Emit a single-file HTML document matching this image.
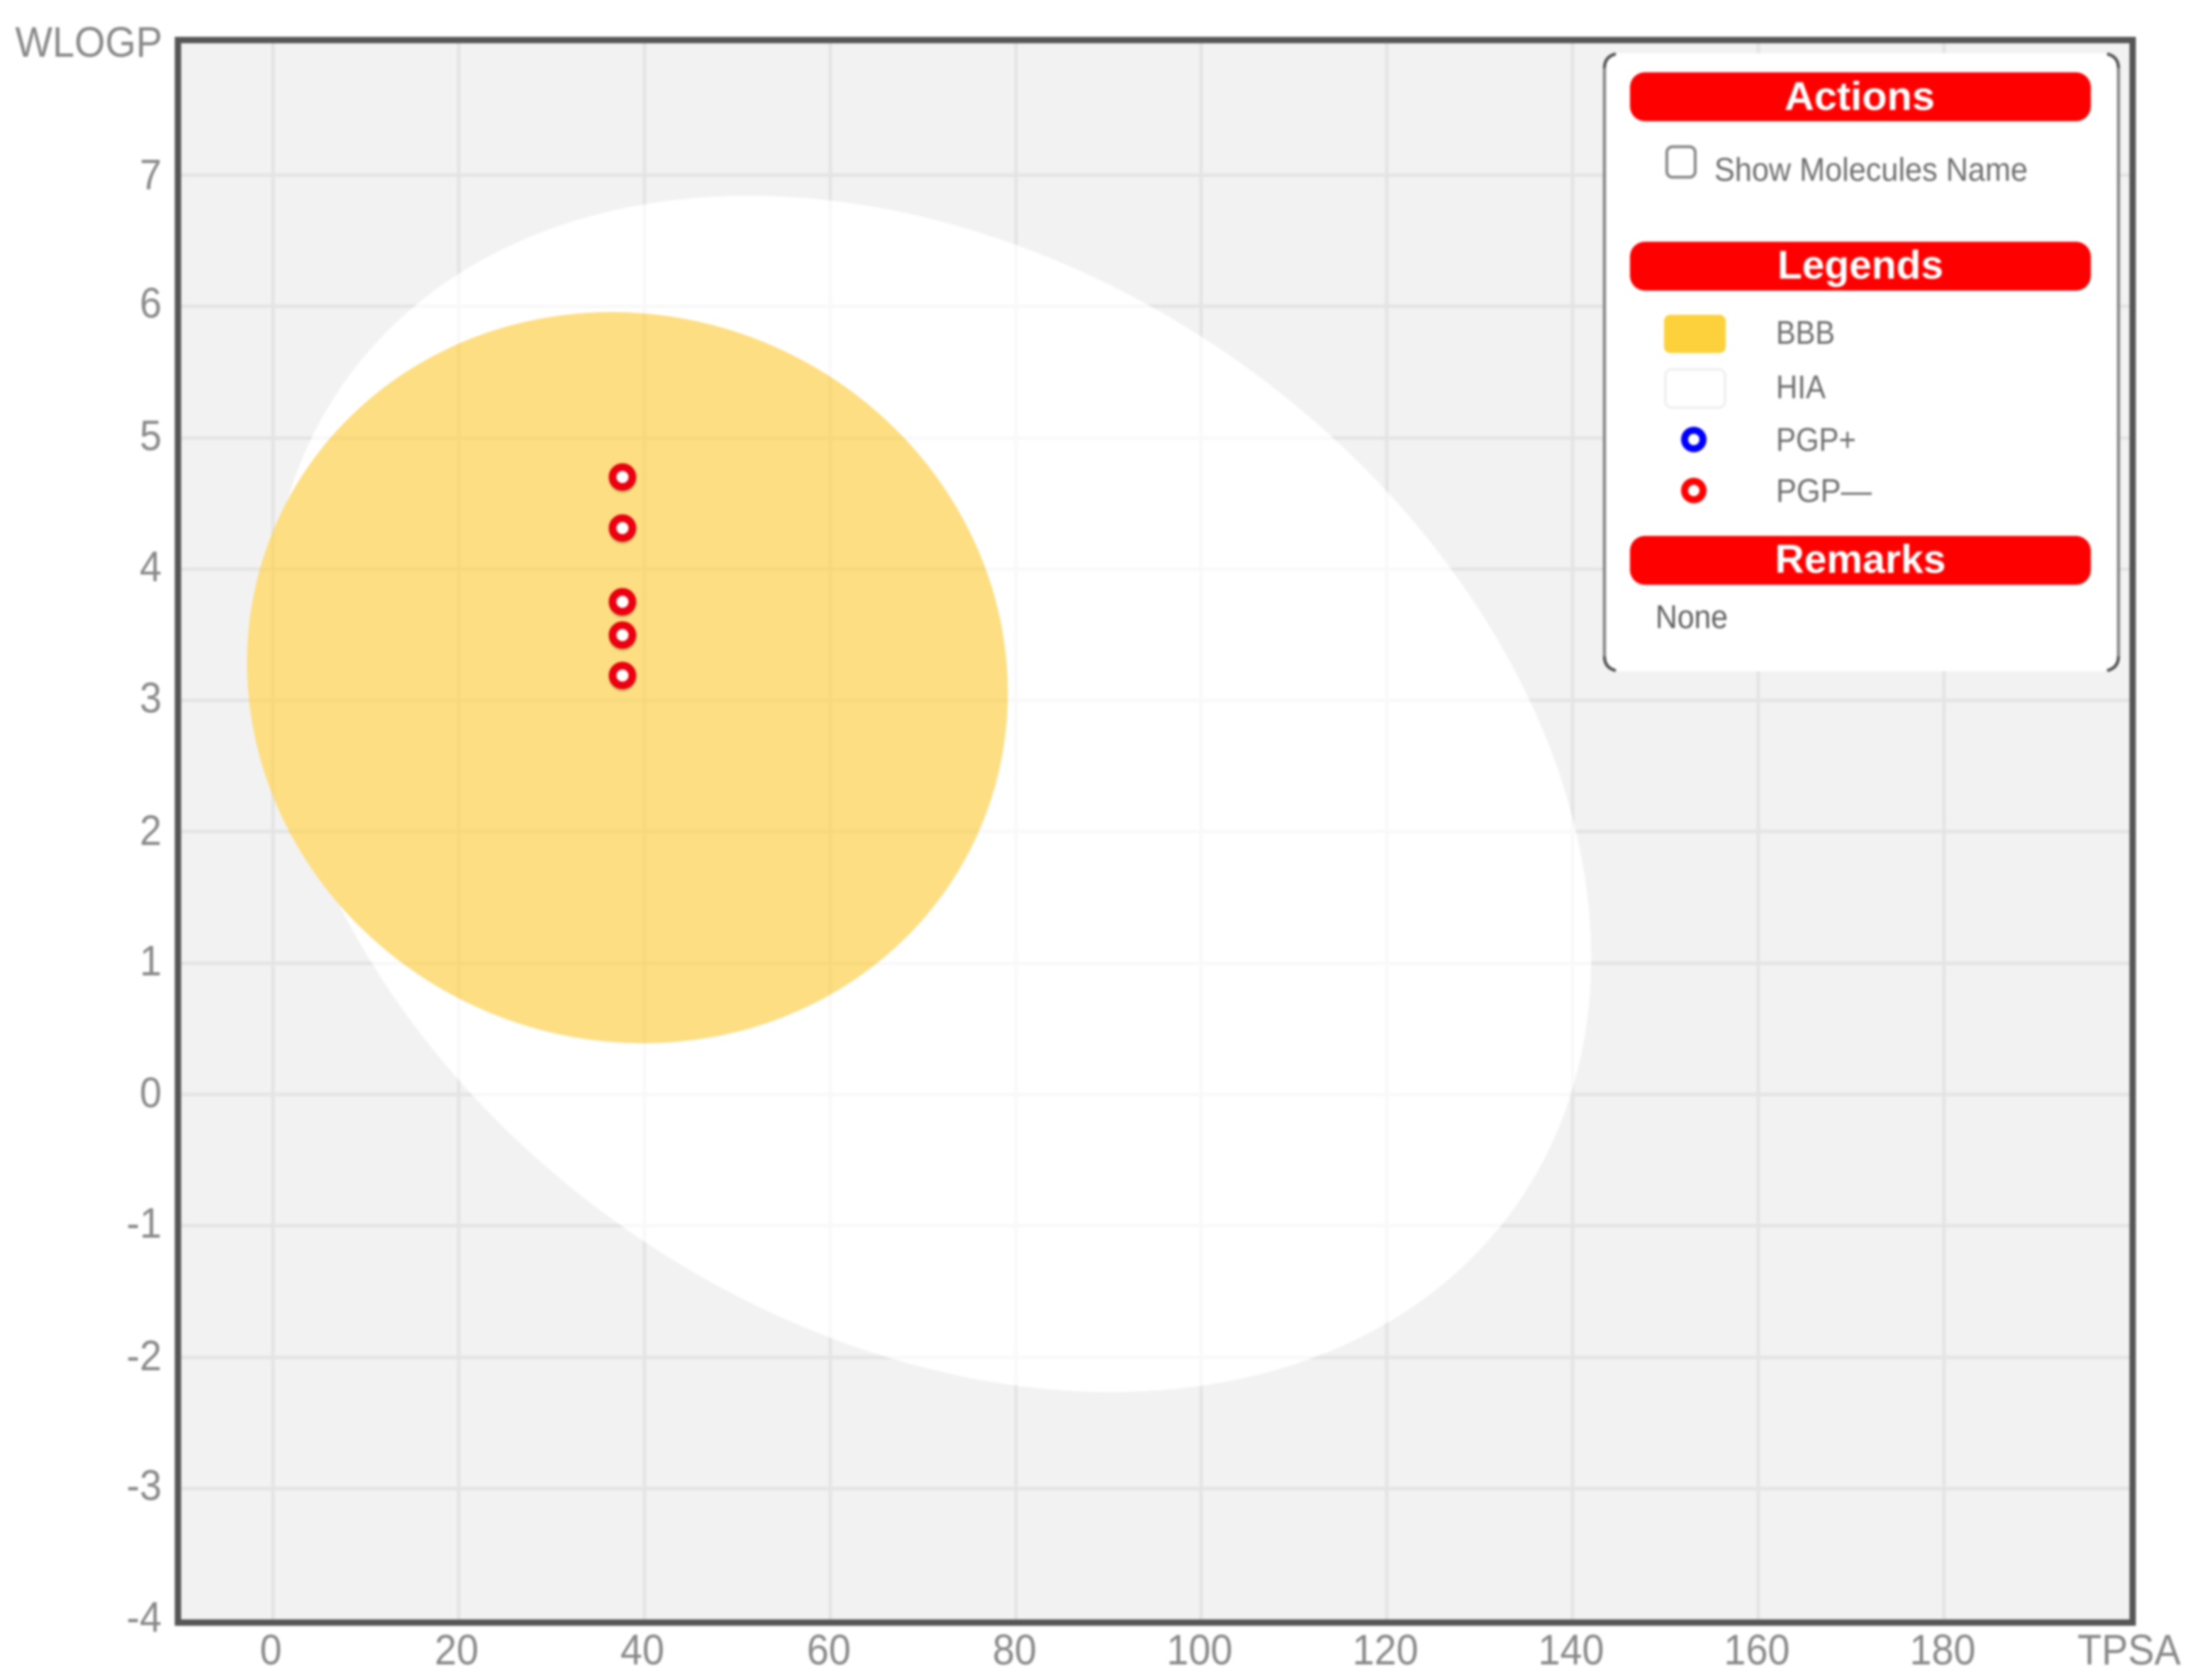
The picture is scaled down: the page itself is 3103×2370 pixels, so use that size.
<!DOCTYPE html>
<html lang="en">
<head>
<meta charset="utf-8">
<title>BOILED-Egg plot</title>
<style>
html,body{margin:0;padding:0;background:#fff;width:3103px;height:2370px;overflow:hidden}
svg{display:block;filter:blur(1.5px)}
text{font-family:"Liberation Sans",Arial,sans-serif}
.ax{font-size:60px;fill:#888}
.hd{font-size:57px;font-weight:700;fill:#fff;text-anchor:middle}
.lb{font-size:46px;fill:#6e6e6e}
</style>
</head>
<body>
<svg xmlns="http://www.w3.org/2000/svg" width="3103" height="2370" viewBox="0 0 3103 2370">
  <rect width="3103" height="2370" fill="#fff"/>
  <!-- plot background -->
  <rect x="251" y="56" width="2757" height="2233" fill="#f2f2f2"/>
  <!-- grid under -->
  <path fill="none" stroke="#eaeaea" stroke-width="5" d="M385 56V2289M647 56V2289M909 56V2289M1171 56V2289M1433 56V2289M1694 56V2289M1956 56V2289M2218 56V2289M2480 56V2289M2742 56V2289M251 247H3008M251 432H3008M251 618H3008M251 803H3008M251 988H3008M251 1173H3008M251 1359H3008M251 1544H3008M251 1729H3008M251 1915H3008M251 2100H3008"/>
  <!-- HIA white -->
  <ellipse cx="1312" cy="1120" rx="1010" ry="749" transform="rotate(35 1312 1120)" fill="#fff"/>
  <!-- BBB yolk -->
  <ellipse cx="885" cy="956" rx="541" ry="511" transform="rotate(23 885 956)" fill="#fdde82"/>
  <!-- grid over -->
  <path fill="none" stroke="#000" stroke-opacity=".022" stroke-width="5" d="M385 56V2289M647 56V2289M909 56V2289M1171 56V2289M1433 56V2289M1694 56V2289M1956 56V2289M2218 56V2289M2480 56V2289M2742 56V2289M251 247H3008M251 432H3008M251 618H3008M251 803H3008M251 988H3008M251 1173H3008M251 1359H3008M251 1544H3008M251 1729H3008M251 1915H3008M251 2100H3008"/>
  <!-- points -->
  <g fill="#5a6a20" fill-opacity=".25">
    <circle cx="878" cy="677" r="19"/><circle cx="878" cy="749" r="19"/><circle cx="878" cy="853" r="19"/><circle cx="878" cy="900" r="19"/><circle cx="878" cy="957" r="19"/>
  </g>
  <g fill="#fff" stroke="#ea0010" stroke-width="11">
    <circle cx="878" cy="673" r="14"/><circle cx="878" cy="745" r="14"/><circle cx="878" cy="849" r="14"/><circle cx="878" cy="896" r="14"/><circle cx="878" cy="953" r="14"/>
  </g>
  <!-- frame -->
  <rect x="251" y="56.5" width="2757" height="2232.5" fill="none" stroke="#565656" stroke-width="9"/>

  <!-- y axis -->
  <g class="ax" text-anchor="end">
    <text transform="translate(229 80) scale(.93 1)">WLOGP</text>
    <text transform="translate(228 267) scale(.93 1)">7</text>
    <text transform="translate(228 448) scale(.93 1)">6</text>
    <text transform="translate(228 635) scale(.93 1)">5</text>
    <text transform="translate(228 820) scale(.93 1)">4</text>
    <text transform="translate(228 1005) scale(.93 1)">3</text>
    <text transform="translate(228 1192) scale(.93 1)">2</text>
    <text transform="translate(228 1376) scale(.93 1)">1</text>
    <text transform="translate(228 1562) scale(.93 1)">0</text>
    <text transform="translate(228 1746) scale(.93 1)">-1</text>
    <text transform="translate(228 1933) scale(.93 1)">-2</text>
    <text transform="translate(228 2116) scale(.93 1)">-3</text>
    <text transform="translate(228 2302) scale(.93 1)">-4</text>
  </g>
  <!-- x axis -->
  <g class="ax" text-anchor="middle">
    <text transform="translate(382 2348) scale(.93 1)">0</text>
    <text transform="translate(644 2348) scale(.93 1)">20</text>
    <text transform="translate(906 2348) scale(.93 1)">40</text>
    <text transform="translate(1169 2348) scale(.93 1)">60</text>
    <text transform="translate(1431 2348) scale(.93 1)">80</text>
    <text transform="translate(1692 2348) scale(.93 1)">100</text>
    <text transform="translate(1954 2348) scale(.93 1)">120</text>
    <text transform="translate(2216 2348) scale(.93 1)">140</text>
    <text transform="translate(2478 2348) scale(.93 1)">160</text>
    <text transform="translate(2740 2348) scale(.93 1)">180</text>
    <text transform="translate(3003 2348) scale(.93 1)">TPSA</text>
  </g>

  <!-- panel -->
  <rect x="2263" y="75" width="725" height="872" rx="22" fill="#fff"/>
  <path d="M2263 96V926" fill="none" stroke="#888" stroke-width="4.5"/>
  <path d="M2988 96V926" fill="none" stroke="#888" stroke-width="4.5"/>
  <path d="M2263 96Q2263 80 2279 76M2263 926Q2263 942 2279 946M2988 96Q2988 80 2972 76M2988 926Q2988 942 2972 946" fill="none" stroke="#555" stroke-width="4.5"/>

  <rect x="2299" y="102" width="650" height="69" rx="21" fill="#f00"/>
  <text class="hd" x="2623" y="155" textLength="212" lengthAdjust="spacingAndGlyphs">Actions</text>
  <rect x="2299" y="341" width="650" height="69" rx="21" fill="#f00"/>
  <text class="hd" x="2624" y="393" textLength="234" lengthAdjust="spacingAndGlyphs">Legends</text>
  <rect x="2299" y="756" width="650" height="69" rx="21" fill="#f00"/>
  <text class="hd" x="2624" y="808" textLength="241" lengthAdjust="spacingAndGlyphs">Remarks</text>

  <rect x="2351" y="207" width="40" height="43" rx="8" fill="#fff" stroke="#868686" stroke-width="4"/>
  <text class="lb" x="2418" y="255" textLength="442" lengthAdjust="spacingAndGlyphs">Show Molecules Name</text>

  <rect x="2347" y="444" width="87" height="54" rx="9" fill="#fdd13b"/>
  <rect x="2349" y="521" width="84" height="54" rx="9" fill="#fff" stroke="#efefef" stroke-width="3.5"/>
  <circle cx="2389" cy="620" r="13" fill="#fff" stroke="#0000ff" stroke-width="10"/>
  <circle cx="2389" cy="692" r="13" fill="#fff" stroke="#ff0000" stroke-width="10"/>

  <text class="lb" x="2505" y="485" textLength="83" lengthAdjust="spacingAndGlyphs">BBB</text>
  <text class="lb" x="2505" y="562" textLength="70" lengthAdjust="spacingAndGlyphs">HIA</text>
  <text class="lb" x="2505" y="636" textLength="113" lengthAdjust="spacingAndGlyphs">PGP+</text>
  <text class="lb" x="2505" y="708" textLength="135" lengthAdjust="spacingAndGlyphs">PGP—</text>
  <text class="lb" x="2335" y="886" textLength="102" lengthAdjust="spacingAndGlyphs" style="fill:#606060">None</text>
</svg>
</body>
</html>
